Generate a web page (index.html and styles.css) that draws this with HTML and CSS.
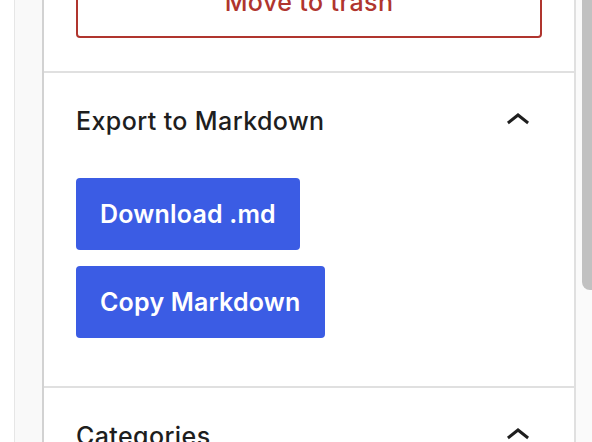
FILE: index.html
```html
<!DOCTYPE html>
<html lang="en">

<head>
    <meta charset="UTF-8">
    <meta name="viewport" content="width=device-width, initial-scale=1.0">
    <title>Post settings</title>
    <link rel="stylesheet" href="styles.css">
</head>

<body>

    <div class="gutter"></div>
    <div class="rail"></div>

    <div class="sidebar">
        <div class="sidebar-scroll">

            <div class="panel panel-trash">
                <button type="button" class="btn-trash">Move to trash</button>
            </div>

            <div class="panel">
                <div class="panel-header">
                    <h2 class="panel-title">Export to Markdown</h2>
                    <span class="panel-toggle">
                        <svg viewBox="0 0 24 24" width="48" height="48" aria-hidden="true">
                            <path d="M6.5 12.4L12 8l5.5 4.4-.9 1.2L12 10l-4.6 3.6-.9-1.2z"></path>
                        </svg>
                    </span>
                </div>
                <div class="panel-body">
                    <button type="button" class="btn-primary">Download .md</button>
                    <button type="button" class="btn-primary">Copy Markdown</button>
                </div>
            </div>

            <div class="panel">
                <div class="panel-header">
                    <h2 class="panel-title">Categories</h2>
                    <span class="panel-toggle">
                        <svg viewBox="0 0 24 24" width="48" height="48" aria-hidden="true">
                            <path d="M6.5 12.4L12 8l5.5 4.4-.9 1.2L12 10l-4.6 3.6-.9-1.2z"></path>
                        </svg>
                    </span>
                </div>
            </div>

        </div>
    </div>

    <div class="scrollbar">
        <div class="scrollbar-thumb"></div>
    </div>

</body>

</html>
```

FILE: styles.css
```css
body {
    font-family: 'Inter', 'Liberation Sans', sans-serif;
    background-color: #fff;
    margin: 0;
    padding: 0;
    display: flex;
    height: 442px;
    overflow: hidden;
    color: #1e1e1e;
}

.gutter {
    width: 14px;
    background-color: #fff;
}

.rail {
    width: 27px;
    border-left: 1px solid #e6e6e6;
    background-color: #f9f9f9;
}

.sidebar {
    width: 530px;
    border-left: 2px solid #d2d2d2;
    border-right: 2px solid #e0e0e0;
    background-color: #fff;
    overflow: hidden;
}

.sidebar-scroll {
    margin-top: -34px;
}

.panel {
    border-bottom: 2px solid #e0e0e0;
}

.panel-trash {
    padding: 0 32px 33px;
}

.btn-trash {
    display: block;
    width: 100%;
    height: 72px;
    background: #fff;
    border: 2px solid #b0352e;
    border-radius: 4px;
    color: #b0352e;
    font-family: inherit;
    font-size: 25px;
    font-weight: 500;
    letter-spacing: 0.4px;
}

.panel-header {
    display: flex;
    align-items: center;
    justify-content: space-between;
    padding: 24px 32px 0;
    height: 48px;
}

.panel-title {
    margin: 0;
    font-size: 25px;
    font-weight: 500;
    letter-spacing: 0.4px;
    line-height: 48px;
}

.panel-toggle {
    display: flex;
    width: 48px;
    height: 48px;
}

.panel-toggle svg {
    fill: #1e1e1e;
}

.panel-body {
    display: flex;
    flex-direction: column;
    align-items: flex-start;
    gap: 16px;
    padding: 33px 32px 48px;
}

.btn-primary {
    height: 72px;
    padding: 0 24px;
    background-color: #3b5ce4;
    color: #fff;
    border: none;
    border-radius: 4px;
    font-family: inherit;
    font-size: 25px;
    font-weight: 600;
    letter-spacing: 0.2px;
    cursor: pointer;
}

.scrollbar {
    flex: 1;
    padding-left: 6px;
    background-color: #fafafa;
}

.scrollbar-thumb {
    height: 290px;
    background-color: #c1c1c1;
    border-radius: 0 0 0 8px;
}
```
